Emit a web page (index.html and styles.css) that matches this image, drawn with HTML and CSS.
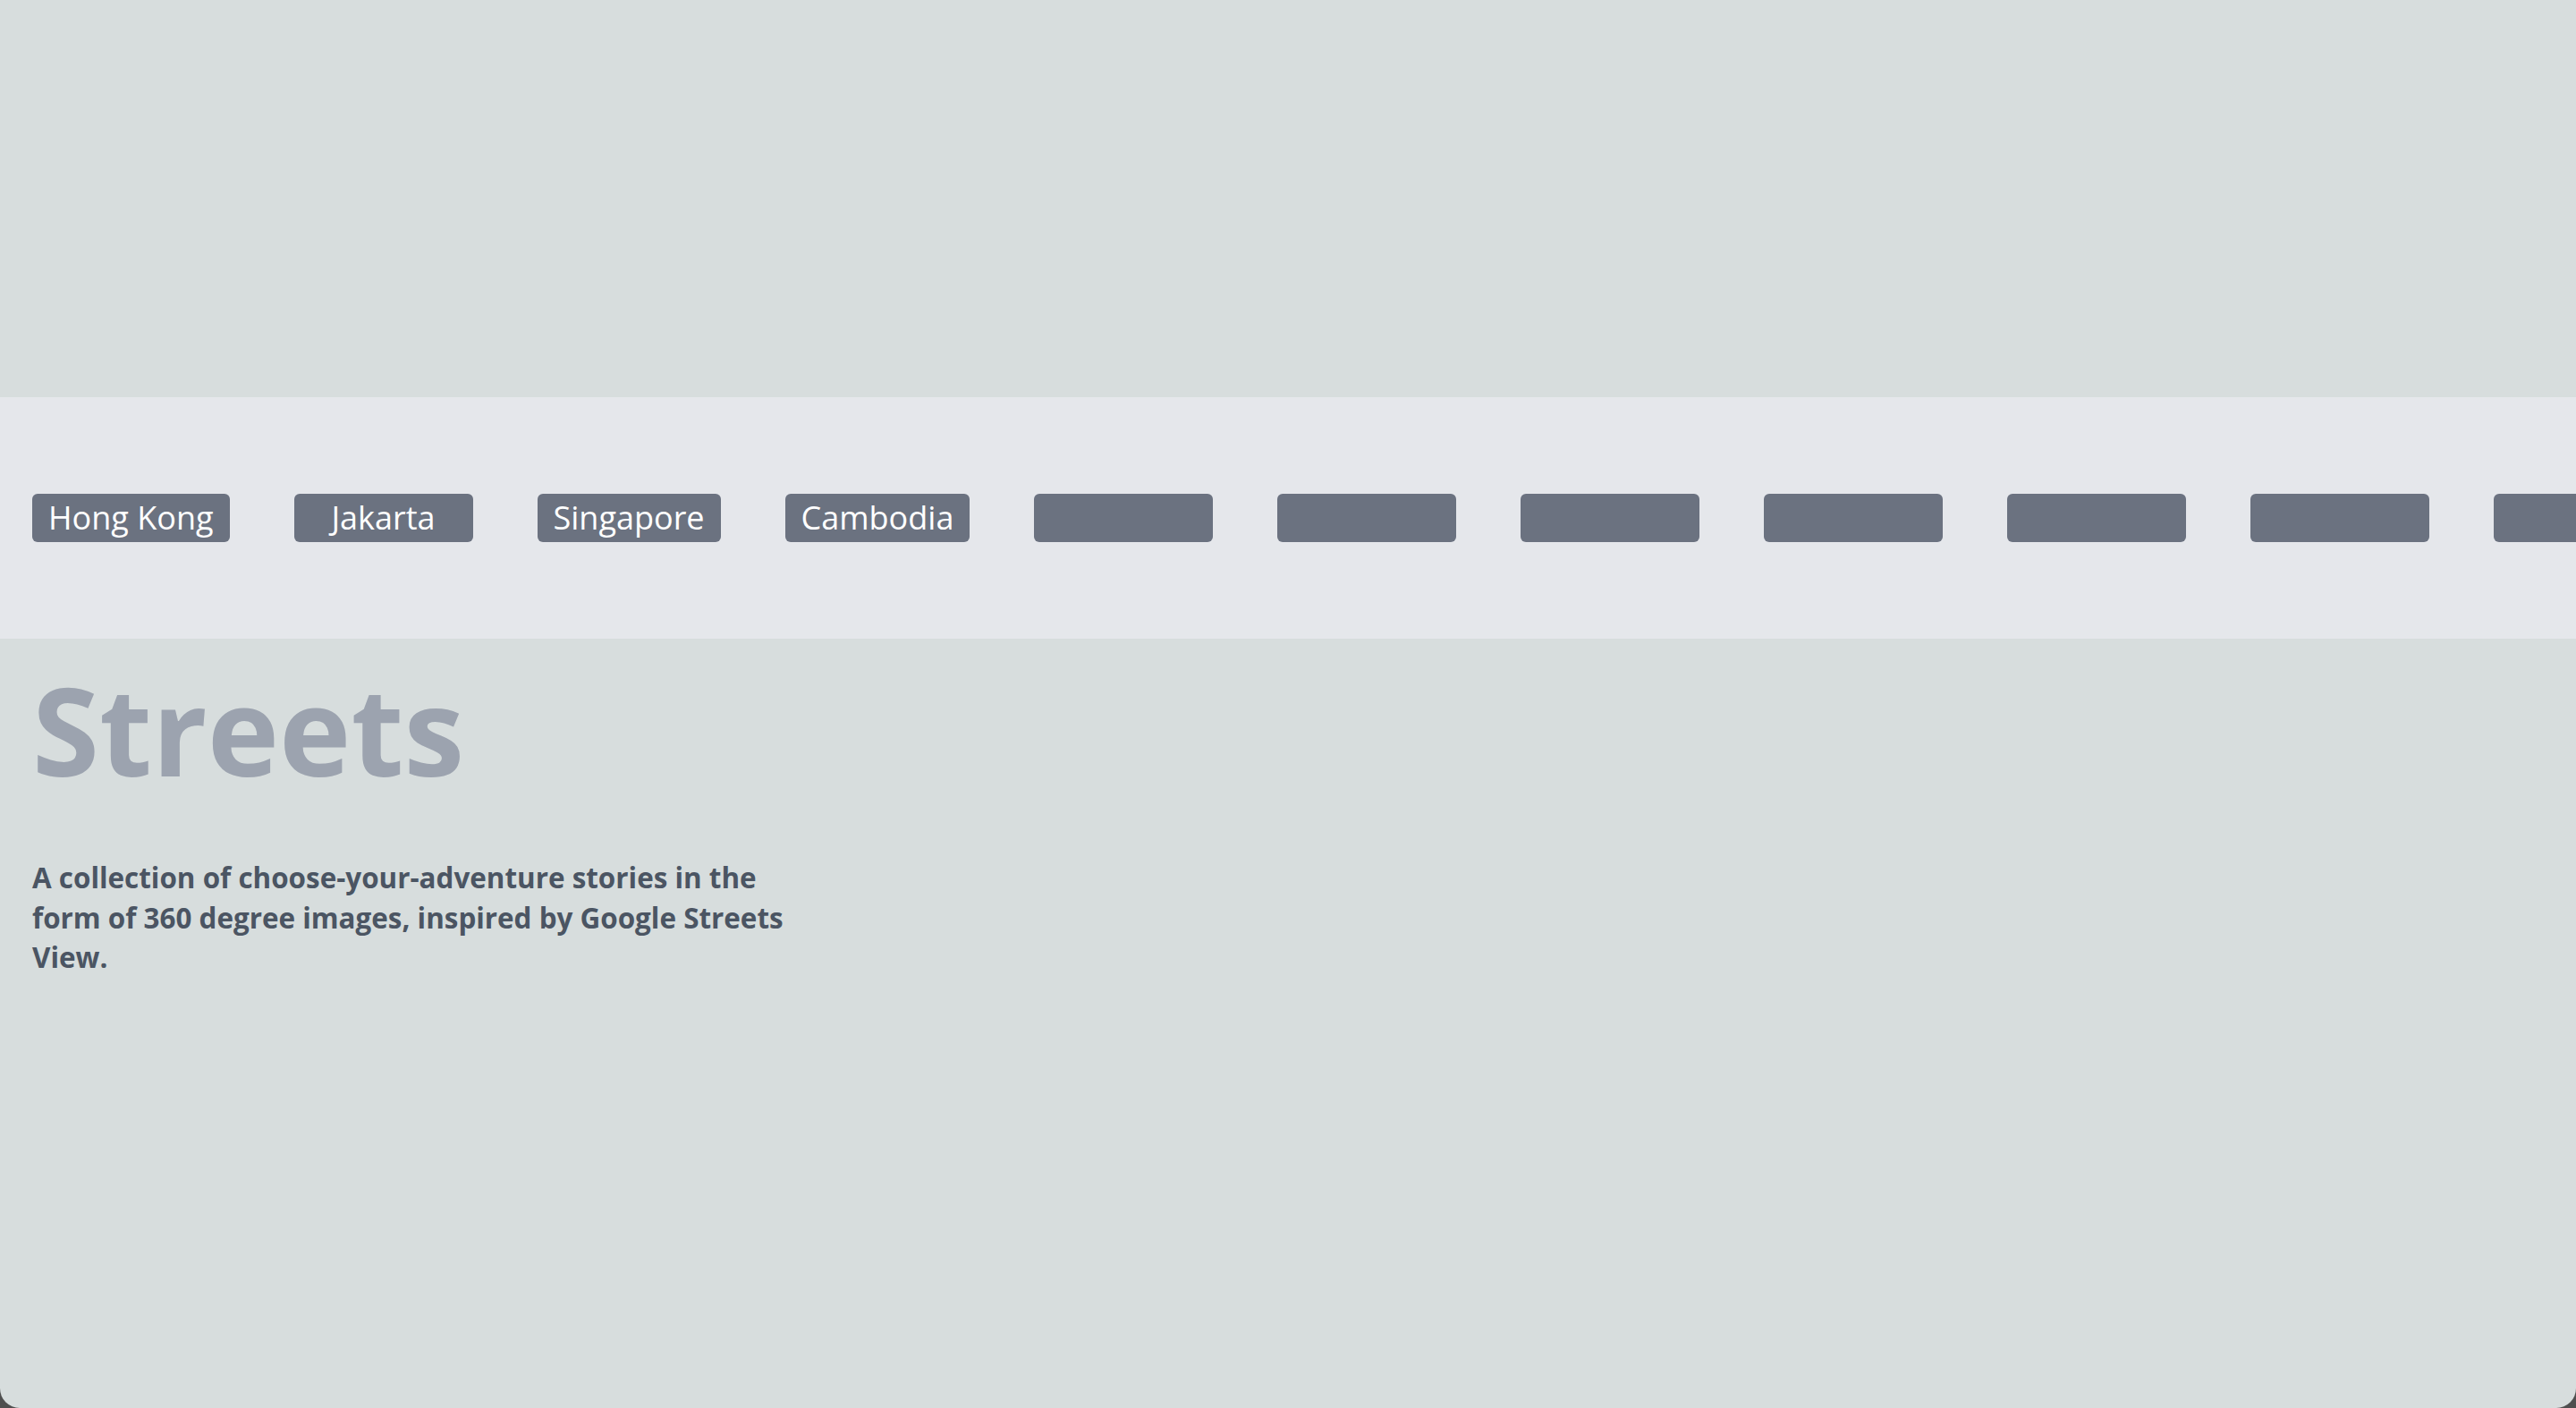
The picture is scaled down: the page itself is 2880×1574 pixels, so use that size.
FILE: index.html
```html
<!DOCTYPE html>
<html lang="en">
<head>
<meta charset="utf-8">
<title>Streets</title>
<link rel="stylesheet" href="styles.css">
</head>
<body>
<div class="window">
  <div class="hero-space"></div>
  <nav class="stories">
    <a class="story" href="#">Hong Kong</a>
    <a class="story" href="#">Jakarta</a>
    <a class="story" href="#">Singapore</a>
    <a class="story" href="#">Cambodia</a>
    <a class="story" href="#"></a>
    <a class="story" href="#"></a>
    <a class="story" href="#"></a>
    <a class="story" href="#"></a>
    <a class="story" href="#"></a>
    <a class="story" href="#"></a>
    <a class="story" href="#"></a>
    <a class="story" href="#"></a>
  </nav>
  <main class="intro">
    <h1 class="title">Streets</h1>
    <p class="lead">A collection of choose-your-adventure stories in the form of 360 degree images, inspired by Google Streets View.</p>
  </main>
</div>
</body>
</html>
```

FILE: styles.css
```css
html {
  margin: 0;
  padding: 0;
  background: #4f4f4f;
}

body {
  margin: 0;
  padding: 0;
  font-family: "Open Sans", "Noto Sans", sans-serif;
}

.window {
  height: 1574px;
  background: #d7dddd;
  border-radius: 0 0 22px 22px;
  overflow: hidden;
}

.hero-space {
  height: 444px;
}

.stories {
  height: 270px;
  background: #e5e7eb;
  display: flex;
  flex-wrap: nowrap;
  align-items: center;
  gap: 72px;
  padding-left: 36px;
  overflow: hidden;
}

.story {
  flex: 0 0 auto;
  min-width: 200px;
  height: 54px;
  box-sizing: border-box;
  padding: 0 18px;
  background: #6b7280;
  color: #ffffff;
  border-radius: 6px;
  font-size: 36px;
  line-height: 54px;
  text-align: center;
  text-decoration: none;
}

.intro {
  padding: 34px 36px 0 36px;
}

.title {
  margin: 0;
  font-size: 136px;
  line-height: 1;
  font-weight: 700;
  color: #9ca3af;
}

.lead {
  margin: 75px 0 0 0;
  max-width: 870px;
  font-size: 31.4px;
  line-height: 44.5px;
  font-weight: 700;
  color: #4b5563;
}
```
